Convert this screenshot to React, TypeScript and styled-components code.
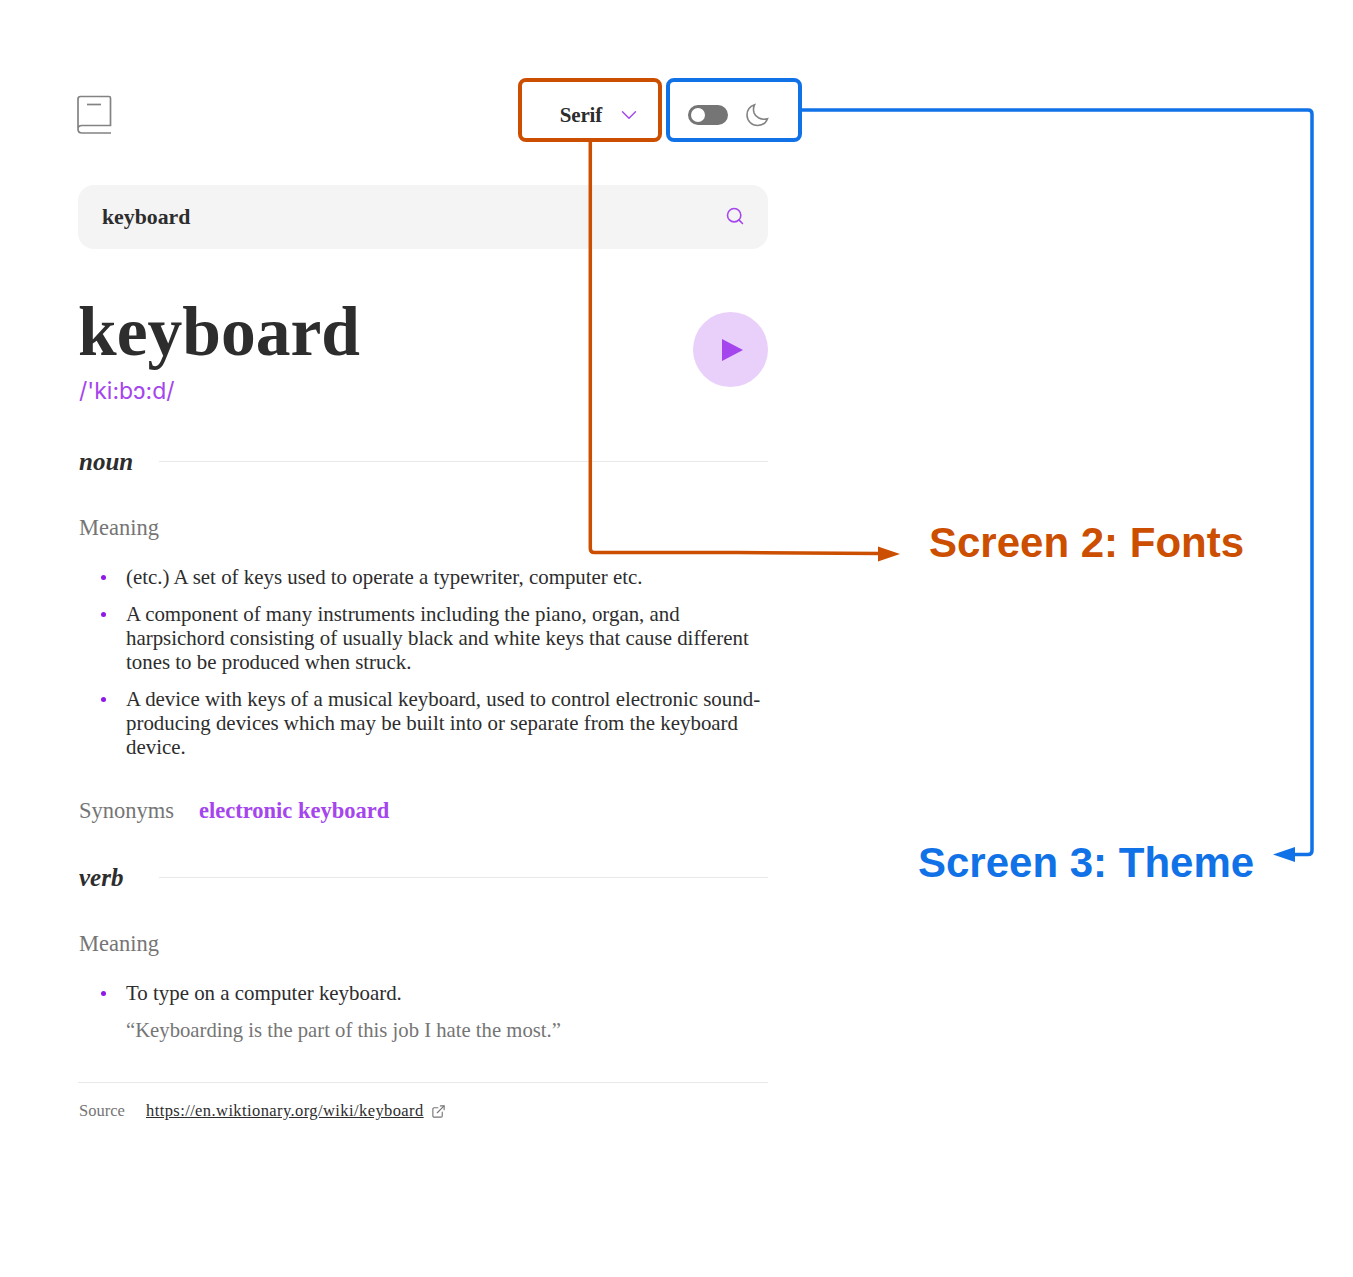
import React from 'react'
import styled, { createGlobalStyle } from 'styled-components'
import { ChevronDown, Search, ExternalLink } from 'lucide-react'

const GlobalStyle = createGlobalStyle`
  html, body {
    margin: 0;
    padding: 0;
    background: #fff;
  }
`

export default function App() {
  return (
    <Page>
      <GlobalStyle />
      <Column>
        <Header>
          <BookIcon />
          <Controls>
            <FontPicker>
              <FontName>Serif</FontName>
              <ChevronDown size={26} color="#a445ed" strokeWidth={1.3} />
            </FontPicker>
            <ThemeSwitch>
              <Toggle>
                <Knob />
              </Toggle>
              <MoonIcon />
            </ThemeSwitch>
          </Controls>
        </Header>

        <SearchBar>
          <SearchText>keyboard</SearchText>
          <SearchGlyph>
            <Search size={20} color="#a445ed" strokeWidth={1.9} />
          </SearchGlyph>
        </SearchBar>

        <WordRow>
          <div>
            <Word>keyboard</Word>
            <Phonetic>/'ki:bɔ:d/</Phonetic>
          </div>
          <PlayButton>
            <PlayTriangle />
          </PlayButton>
        </WordRow>

        <PartHeading>
          <PartName>noun</PartName>
          <Rule />
        </PartHeading>
        <Label>Meaning</Label>
        <Definitions>
          <Definition>(etc.) A set of keys used to operate a typewriter, computer etc.</Definition>
          <Definition>
            A component of many instruments including the piano, organ, and harpsichord consisting of usually black and
            white keys that cause different tones to be produced when struck.
          </Definition>
          <Definition>
            A device with keys of a musical keyboard, used to control electronic sound-producing devices which may be
            built into or separate from the keyboard device.
          </Definition>
        </Definitions>
        <SynonymRow>
          <SynonymLabel>Synonyms</SynonymLabel>
          <Synonym>electronic keyboard</Synonym>
        </SynonymRow>

        <VerbHeading>
          <PartName>verb</PartName>
          <Rule />
        </VerbHeading>
        <Label>Meaning</Label>
        <Definitions>
          <Definition>To type on a computer keyboard.</Definition>
        </Definitions>
        <Example>“Keyboarding is the part of this job I hate the most.”</Example>

        <Footer>
          <SourceLabel>Source</SourceLabel>
          <SourceLink>https://en.wiktionary.org/wiki/keyboard</SourceLink>
          <ExternalLink size={15} color="#757575" strokeWidth={1.8} />
        </Footer>
      </Column>

      <FontsBox />
      <ThemeBox />
      <Connectors width="1353" height="1277" viewBox="0 0 1353 1277">
        <path d="M590.300 141V548.500q0 4 4 4H737L880 553.500" fill="none" stroke="#cc4e00" strokeWidth="3.500" />
        <path d="M878 546.500l22 7.500-22 7.500z" fill="#cc4e00" />
        <path d="M801 110H1308q4 0 4 4V850.500q0 4-4 4H1290" fill="none" stroke="#1172e8" strokeWidth="3.500" />
        <path d="M1273 854.500l22-7.500v15z" fill="#1172e8" />
      </Connectors>
      <FontsCaption>Screen 2: Fonts</FontsCaption>
      <ThemeCaption>Screen 3: Theme</ThemeCaption>
    </Page>
  )
}

function BookIcon() {
  return (
    <BookSvg width="36" height="40" viewBox="0 0 36 40" fill="none" stroke="#838383" strokeWidth="1.7">
      <path d="M2 33V4q0-2.500 2.500-2.500H33q1.500 0 1.500 1.500V30.500H6q-4 0-4 3.500 0 4 4 4H35" />
      <path d="M11 9.500H25" />
    </BookSvg>
  )
}

function MoonIcon() {
  return (
    <svg width="24" height="24" viewBox="0 0 24 24" fill="none" stroke="#838383" strokeWidth="1.6">
      <path d="M8.500 1.800C3.800 3.500 1 7.500 1 12c0 6 4.800 10.500 10.500 10.500 4.700 0 8.500-2.700 10-6.800-6.500 1.800-12-1.500-13.500-6-.8-2.700-.7-5.400.5-7.900z" />
    </svg>
  )
}

const Page = styled.div`
  position: relative;
  width: 1353px;
  height: 1277px;
  overflow: hidden;
  background: #fff;
  color: #2d2d2d;
  font-family: 'Liberation Serif', serif;
`

const Column = styled.main`
  width: 690px;
  margin-left: 78px;
  padding-top: 96px;
`

const Header = styled.header`
  display: flex;
  align-items: center;
  justify-content: space-between;
  height: 38px;
`

const BookSvg = styled.svg`
  margin-left: -2px;
`

const Controls = styled.div`
  display: flex;
  align-items: center;
  margin-right: -2px;
`

const FontPicker = styled.div`
  display: flex;
  align-items: center;
  gap: 14px;
  margin-right: 46px;
`

const FontName = styled.span`
  font-size: 21px;
  font-weight: 700;
  letter-spacing: -0.2px;
`

const ThemeSwitch = styled.div`
  display: flex;
  align-items: center;
  gap: 18px;
`

const Toggle = styled.div`
  display: flex;
  align-items: center;
  width: 40px;
  height: 20px;
  padding-left: 3px;
  box-sizing: border-box;
  border-radius: 10px;
  background: #757575;
`

const Knob = styled.div`
  width: 14px;
  height: 14px;
  border-radius: 50%;
  background: #fff;
`

const SearchBar = styled.div`
  display: flex;
  align-items: center;
  justify-content: space-between;
  height: 64px;
  margin-top: 51px;
  padding: 0 23px 0 24px;
  box-sizing: border-box;
  border-radius: 16px;
  background: #f4f4f4;
`

const SearchText = styled.span`
  font-size: 21.8px;
  font-weight: 700;
`

const SearchGlyph = styled.span`
  display: flex;
  margin-bottom: 2px;
`

const WordRow = styled.section`
  display: flex;
  align-items: flex-start;
  justify-content: space-between;
  margin-top: 43px;
`

const Word = styled.h1`
  margin: 0;
  font-size: 69.5px;
  line-height: 80px;
  font-weight: 700;
`

const Phonetic = styled.div`
  margin-top: 5px;
  padding-left: 1px;
  font-family: 'Inter', sans-serif;
  font-size: 23px;
  line-height: 29px;
  color: #a445ed;
`

const PlayButton = styled.div`
  display: flex;
  align-items: center;
  justify-content: center;
  width: 75px;
  height: 75px;
  margin-top: 20px;
  border-radius: 50%;
  background: #e9d0fa;
`

const PlayTriangle = styled.div`
  width: 0;
  height: 0;
  margin-left: 3px;
  border-style: solid;
  border-width: 11px 0 11px 21px;
  border-color: transparent transparent transparent #a445ed;
`

const PartHeading = styled.div`
  display: flex;
  align-items: center;
  gap: 25px;
  margin-top: 41px;
  padding-left: 1px;
`

const VerbHeading = styled(PartHeading)`
  margin-top: 39px;
`

const PartName = styled.span`
  width: 55px;
  font-size: 25px;
  line-height: 30px;
  font-weight: 700;
  font-style: italic;
`

const Rule = styled.div`
  flex: 1;
  height: 1px;
  margin-bottom: 2px;
  background: #e9e9e9;
`

const Label = styled.div`
  margin-top: 38px;
  padding-left: 1px;
  font-size: 22.5px;
  line-height: 26px;
  color: #757575;
`

const Definitions = styled.ul`
  display: flex;
  flex-direction: column;
  gap: 13px;
  margin: 24px 0 0;
  padding: 0 0 0 48px;
  list-style: none;
`

const Definition = styled.li`
  position: relative;
  font-size: 20.9px;
  line-height: 24px;

  &::before {
    content: '';
    position: absolute;
    left: -25px;
    top: 10px;
    width: 5px;
    height: 5px;
    border-radius: 50%;
    background: #8f19e8;
  }
`

const SynonymRow = styled.div`
  display: flex;
  align-items: baseline;
  gap: 25px;
  margin-top: 39px;
  padding-left: 1px;
`

const SynonymLabel = styled.span`
  font-size: 22.5px;
  line-height: 26px;
  color: #757575;
`

const Synonym = styled.span`
  font-size: 22.5px;
  font-weight: 700;
  color: #a445ed;
`

const Example = styled.div`
  margin-top: 13px;
  padding-left: 48px;
  font-size: 20.7px;
  line-height: 24px;
  color: #757575;
`

const Footer = styled.footer`
  display: flex;
  align-items: center;
  margin-top: 40px;
  padding: 19px 0 0 1px;
  border-top: 1px solid #e9e9e9;
`

const SourceLabel = styled.span`
  width: 67px;
  font-size: 16.5px;
  line-height: 18px;
  color: #757575;
`

const SourceLink = styled.span`
  margin-right: 7px;
  font-size: 16.5px;
  line-height: 18px;
  letter-spacing: 0.41px;
  text-decoration: underline;
`

const AnnotationBox = styled.div`
  position: absolute;
  top: 78px;
  height: 64px;
  box-sizing: border-box;
  border-radius: 8px;
  border: 4px solid;
`

const FontsBox = styled(AnnotationBox)`
  left: 518px;
  width: 144px;
  border-color: #cc4e00;
`

const ThemeBox = styled(AnnotationBox)`
  left: 666px;
  width: 136px;
  border-color: #1172e8;
`

const Connectors = styled.svg`
  position: absolute;
  top: 0;
  left: 0;
  pointer-events: none;
`

const Caption = styled.div`
  position: absolute;
  font-family: 'Liberation Sans', sans-serif;
  font-size: 42px;
  line-height: 50px;
  font-weight: 700;
  white-space: nowrap;
`

const FontsCaption = styled(Caption)`
  left: 929px;
  top: 518px;
  color: #cc4e00;
`

const ThemeCaption = styled(Caption)`
  left: 918px;
  top: 838px;
  color: #1172e8;
`
